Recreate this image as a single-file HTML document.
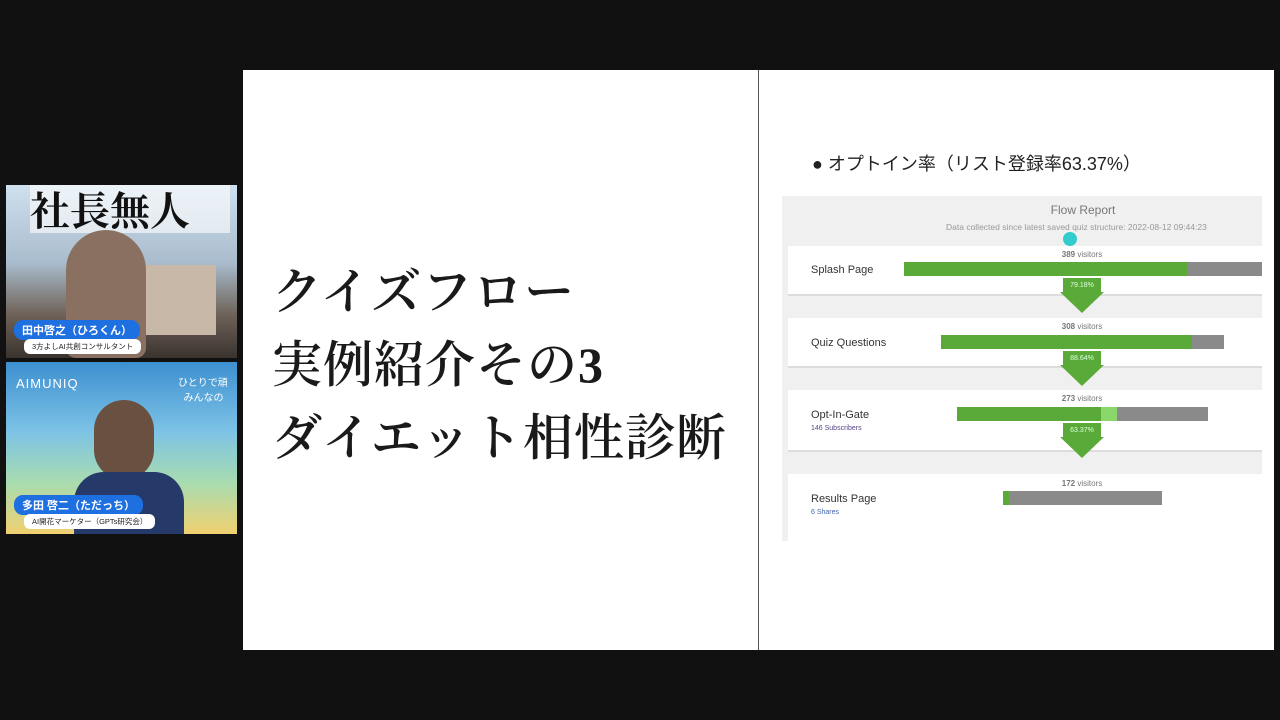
<!DOCTYPE html>
<html><head><meta charset="utf-8"><style>
*{margin:0;padding:0;box-sizing:border-box}
body{width:1280px;height:720px;background:#111;position:relative;overflow:hidden;font-family:"Liberation Sans","Noto Sans CJK JP",sans-serif}
.a{position:absolute}
.slide{left:243px;top:70px;width:1031px;height:580px;background:#fff}
.title{left:272px;top:256px;font-family:"Liberation Serif","Noto Serif CJK JP",serif;font-weight:600;font-size:50px;line-height:73px;color:#1a1a1a;white-space:nowrap;letter-spacing:1px}
.panel{left:782px;top:196px;width:480px;height:345px;background:#f0f0f0}
.row{position:absolute;left:788px;width:474px;background:#fff;border-bottom:2px solid #ddd}
.lbl{position:absolute;left:811px;font-size:11px;color:#333}
.vis{position:absolute;left:1040px;width:84px;text-align:center;font-size:8px;color:#777}
.bar{position:absolute;height:14px}
.g{background:#5aaa3a}.gr{background:#8a8a8a}
.cam{position:absolute;left:6px;width:231px;overflow:hidden}
.name{position:absolute;background:#1e6fe0;color:#fff;font-size:11px;font-weight:bold;border-radius:9px;padding:2px 8px}
.sub{position:absolute;background:#fff;color:#222;font-size:7.5px;border-radius:6px;padding:2px 8px}
</style></head><body>
<div class="a slide"></div>
<div class="a" style="left:758px;top:70px;width:1px;height:580px;background:#555"></div>
<div class="a title">クイズフロー<br>実例紹介その3<br>ダイエット相性診断</div>
<div class="a" style="left:812px;top:150px;font-size:18px;color:#222;white-space:nowrap">● オプトイン率（リスト登録率63.37%）</div>
<div class="a panel"></div>
<div class="a" style="left:1000px;top:203px;width:166px;text-align:center;font-size:12px;color:#777">Flow Report</div>
<div class="a" style="left:946px;top:222px;font-size:8.5px;color:#999;white-space:nowrap">Data collected since latest saved quiz structure: 2022-08-12 09:44:23</div>
<div class="row" style="top:246px;height:50px"></div>
<div class="row" style="top:318px;height:50px"></div>
<div class="row" style="top:390px;height:62px"></div>
<div class="row" style="top:474px;height:68px;border:none"></div>
<div class="a" style="left:1063px;top:232px;width:14px;height:14px;border-radius:50%;background:#3cc;"></div>
<div class="lbl" style="top:264px">Splash Page</div>
<div class="lbl" style="top:337px">Quiz Questions</div>
<div class="lbl" style="top:409px">Opt-In-Gate</div>
<div class="lbl" style="top:425px;font-size:7px;color:#548">146 Subscribers</div>
<div class="lbl" style="top:493px">Results Page</div>
<div class="lbl" style="top:509px;font-size:7px;color:#46a">6 Shares</div>
<div class="vis" style="top:250px"><b>389</b> visitors</div>
<div class="vis" style="top:322px"><b>308</b> visitors</div>
<div class="vis" style="top:394px"><b>273</b> visitors</div>
<div class="vis" style="top:479px"><b>172</b> visitors</div>
<div class="bar g" style="left:904px;top:262px;width:283px"></div><div class="bar gr" style="left:1187px;top:262px;width:75px"></div>
<div class="bar g" style="left:941px;top:335px;width:251px"></div><div class="bar gr" style="left:1192px;top:335px;width:32px"></div>
<div class="bar g" style="left:957px;top:407px;width:144px"></div><div class="bar" style="left:1101px;top:407px;width:16px;background:#8cd76c"></div><div class="bar gr" style="left:1117px;top:407px;width:91px"></div>
<div class="bar g" style="left:1003px;top:491px;width:6px"></div><div class="bar gr" style="left:1009px;top:491px;width:153px"></div>
<svg class="a" style="left:1060px;top:278px" width="44" height="36"><path d="M3 0h38v14h3L22 35 0 14h3z" fill="#5aaa3a"/><text x="22" y="9" font-size="7" fill="#dfd" text-anchor="middle" font-family="Liberation Sans">79.18%</text></svg>
<svg class="a" style="left:1060px;top:351px" width="44" height="36"><path d="M3 0h38v14h3L22 35 0 14h3z" fill="#5aaa3a"/><text x="22" y="9" font-size="7" fill="#dfd" text-anchor="middle" font-family="Liberation Sans">88.64%</text></svg>
<svg class="a" style="left:1060px;top:423px" width="44" height="36"><path d="M3 0h38v14h3L22 35 0 14h3z" fill="#5aaa3a"/><text x="22" y="9" font-size="7" fill="#dfd" text-anchor="middle" font-family="Liberation Sans">63.37%</text></svg>

<div class="cam" style="top:185px;height:173px;background:linear-gradient(180deg,#cfe0ee 0%,#a9bccd 45%,#6e6258 75%,#3a332e 100%)">
  <div class="a" style="left:24px;top:0;width:200px;height:48px;font-family:'Noto Serif CJK JP',serif;font-weight:bold;font-size:40px;line-height:48px;color:#111;background:rgba(255,255,255,.6)">社長無人</div>
  <div class="a" style="left:60px;top:45px;width:80px;height:128px;border-radius:40px 40px 10px 10px;background:#8a7060"></div>
  <div class="a" style="left:140px;top:80px;width:70px;height:70px;background:#c8b8a8"></div>
  <div class="name" style="left:8px;top:135px">田中啓之（ひろくん）</div>
  <div class="sub" style="left:18px;top:154px">3方よしAI共創コンサルタント</div>
</div>
<div class="cam" style="top:362px;height:172px;background:linear-gradient(180deg,#3d8fd0 0%,#7cc2e6 40%,#a8dcb0 70%,#f0d070 100%)">
  <div class="a" style="left:10px;top:14px;color:#fff;font-size:13px;letter-spacing:1px">AIMUNIQ</div>
  <div class="a" style="left:172px;top:14px;color:#fff;font-size:10px;line-height:15px">ひとりで頑<br>&nbsp;&nbsp;みんなの</div>
  <div class="a" style="left:88px;top:38px;width:60px;height:80px;border-radius:30px;background:#6a5040"></div>
  <div class="a" style="left:68px;top:110px;width:110px;height:62px;border-radius:30px 30px 0 0;background:#263a6a"></div>
  <div class="name" style="left:8px;top:133px">多田 啓二（ただっち）</div>
  <div class="sub" style="left:18px;top:152px">AI開花マーケター（GPTs研究会）</div>
</div>
</body></html>
